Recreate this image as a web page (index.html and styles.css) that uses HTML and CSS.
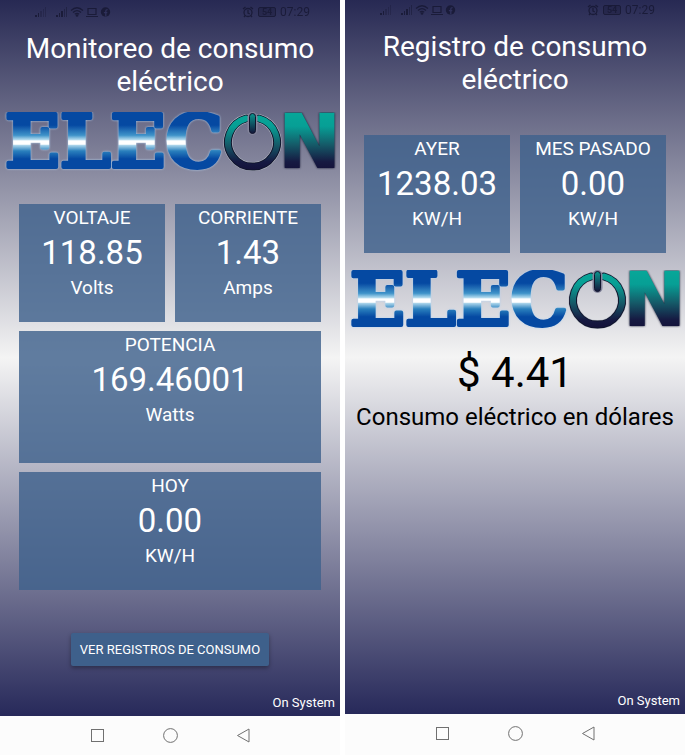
FILE: index.html
```html
<!DOCTYPE html>
<html lang="es">
<head>
<meta charset="utf-8">
<meta name="viewport" content="width=device-width, initial-scale=1">
<title>Elecon</title>
<link rel="stylesheet" href="styles.css">
</head>
<body>
<svg class="defs" aria-hidden="true">
  <defs>
    <linearGradient id="steel" gradientUnits="userSpaceOnUse" x1="0" y1="2" x2="0" y2="58">
      <stop offset="0" stop-color="#0549a2"/>
      <stop offset=".2" stop-color="#0549a2"/>
      <stop offset=".38" stop-color="#3f93c9"/>
      <stop offset=".46" stop-color="#b5dcef"/>
      <stop offset=".48" stop-color="#ffffff"/>
      <stop offset=".54" stop-color="#ffffff"/>
      <stop offset=".56" stop-color="#a9d3ea"/>
      <stop offset=".66" stop-color="#2a80bd"/>
      <stop offset=".8" stop-color="#0549a2"/>
      <stop offset="1" stop-color="#0549a2"/>
    </linearGradient>
    <linearGradient id="teal" gradientUnits="userSpaceOnUse" x1="0" y1="2" x2="0" y2="58">
      <stop offset="0" stop-color="#07a698"/>
      <stop offset=".22" stop-color="#079f95"/>
      <stop offset=".55" stop-color="#155a68"/>
      <stop offset=".85" stop-color="#161a42"/>
      <stop offset="1" stop-color="#14123a"/>
    </linearGradient>
    <linearGradient id="bar" gradientUnits="userSpaceOnUse" x1="0" y1="2" x2="0" y2="21">
      <stop offset="0" stop-color="#0b938c"/>
      <stop offset="1" stop-color="#14183c"/>
    </linearGradient>
    <g id="power-ring"><path d="M246 6.500A24.500 24.500 0 1 0 259 6.500"/></g>
    <symbol id="elecon" viewBox="0 0 340 60">
      <text class="logo-serif" x="5" y="55">ELEC</text>
      <g fill="none" stroke-linecap="round">
        <use href="#power-ring" stroke="#b9bfc9" stroke-width="9"/>
        <use href="#power-ring" stroke="#10142c" stroke-width="8"/>
        <use href="#power-ring" stroke="url(#teal)" stroke-width="6"/>
      </g>
      <rect x="247.500" y="0" width="10" height="23" rx="5" fill="#84859c"/>
      <rect x="249.500" y="1.500" width="6" height="20" rx="3" fill="url(#bar)" stroke="#10142c"/>
      <text class="logo-sans" x="279" y="55">N</text>
    </symbol>
    <symbol id="status-left" viewBox="0 0 76 12">
      <g fill="currentColor">
        <path d="M0 9h2v2H0zM3 7h1v4H3z"/>
        <path opacity=".4" d="M5 5h2v6H5zM8 3h1v8H8zM10 1h1v10h-1z"/>
        <path d="M21 9h2v2h-2zM24 7h1v4h-1zM26 5h2v6h-2z"/>
        <path opacity=".6" d="M29 3h1v8h-1zM31 1h1v10h-1z"/>
        <circle cx="42" cy="9.500" r="1.300"/>
        <circle cx="70.500" cy="6" r="4.700"/>
      </g>
      <g fill="none" stroke="currentColor" stroke-width="1.200">
        <path d="M36 4.500Q42 -1 48 4.500M38 6.500Q42 2.800 46 6.500M39.800 8.300Q42 6.300 44.200 8.300"/>
        <path d="M53 2.500h8v6h-8zM51 10.500h12"/>
      </g>
      <path d="M70.800 10.500V5.200q0-1.600 1.800-1.500M68.900 6.600h3.400" fill="none" stroke="#30325d" stroke-width="1.300"/>
    </symbol>
    <symbol id="alarm" viewBox="0 0 12 12">
      <g fill="none" stroke="currentColor" stroke-width="1.300">
        <circle cx="6" cy="6.500" r="4"/><path d="M6 4v3l1.800 1M1 3l2.500-2M11 3L8.500 1M3.300 9.500L2 11M8.700 9.500L10 11"/>
      </g>
    </symbol>
  </defs>
</svg>

<main class="phones">
  <section class="phone">
    <div class="screen">
      <div class="status">
        <svg class="status-icons"><use href="#status-left"/></svg>
        <span class="status-right"><svg class="alarm"><use href="#alarm"/></svg><span class="battery">54</span><time>07:29</time></span>
      </div>
      <h1 class="title">Monitoreo de consumo eléctrico</h1>
      <svg class="logo" viewBox="0 0 340 60" role="img" aria-label="Elecon"><use href="#elecon"/></svg>
      <div class="tiles">
        <article class="tile"><h2>VOLTAJE</h2><strong>118.85</strong><span>Volts</span></article>
        <article class="tile"><h2>CORRIENTE</h2><strong>1.43</strong><span>Amps</span></article>
        <article class="tile wide tall"><h2>POTENCIA</h2><strong>169.46001</strong><span>Watts</span></article>
        <article class="tile wide"><h2>HOY</h2><strong>0.00</strong><span>KW/H</span></article>
      </div>
      <button class="action" type="button">VER REGISTROS DE CONSUMO</button>
      <p class="brand">On System</p>
    </div>
    <nav class="nav">
      <button type="button" aria-label="Recientes"><svg viewBox="0 0 15 15"><rect x="1.500" y="1.500" width="12" height="12"/></svg></button>
      <button type="button" aria-label="Inicio"><svg viewBox="0 0 15 15"><circle cx="7.500" cy="7.500" r="6.900"/></svg></button>
      <button type="button" aria-label="Atrás"><svg viewBox="0 0 15 15"><path d="M13 1v13L1.500 7.500z"/></svg></button>
    </nav>
  </section>

  <section class="phone phone-log">
    <div class="screen">
      <div class="status">
        <svg class="status-icons"><use href="#status-left"/></svg>
        <span class="status-right"><svg class="alarm"><use href="#alarm"/></svg><span class="battery">54</span><time>07:29</time></span>
      </div>
      <h1 class="title">Registro de consumo eléctrico</h1>
      <div class="tiles">
        <article class="tile"><h2>AYER</h2><strong>1238.03</strong><span>KW/H</span></article>
        <article class="tile"><h2>MES PASADO</h2><strong>0.00</strong><span>KW/H</span></article>
      </div>
      <svg class="logo" viewBox="0 0 340 60" role="img" aria-label="Elecon"><use href="#elecon"/></svg>
      <p class="cost">$ 4.41</p>
      <p class="cost-label">Consumo eléctrico en dólares</p>
      <p class="brand">On System</p>
    </div>
    <nav class="nav">
      <button type="button" aria-label="Recientes"><svg viewBox="0 0 15 15"><rect x="1.500" y="1.500" width="12" height="12"/></svg></button>
      <button type="button" aria-label="Inicio"><svg viewBox="0 0 15 15"><circle cx="7.500" cy="7.500" r="6.900"/></svg></button>
      <button type="button" aria-label="Atrás"><svg viewBox="0 0 15 15"><path d="M13 1v13L1.500 7.500z"/></svg></button>
    </nav>
  </section>
</main>
</body>
</html>
```
FILE: styles.css
```css
* {
  box-sizing: border-box;
}

body {
  margin: 0;
  background: #fff;
  color: #fff;
  font-family: Roboto, "Liberation Sans", sans-serif;
}

h1, h2, p {
  margin: 0;
  font-weight: 400;
}

.defs {
  position: absolute;
  width: 0;
  height: 0;
}

.phones {
  display: grid;
  grid-template-columns: 1fr 1fr;
  gap: 5px;
  min-height: 100vh;
  padding-right: 1px;
}

.phone {
  display: flex;
  flex-direction: column;
}

.screen {
  flex: 1;
  display: flex;
  flex-direction: column;
  padding-top: 4px;
  background: linear-gradient(#272953, #f4f4f4 50%, #27295a);
}

.status {
  display: flex;
  align-items: center;
  justify-content: space-between;
  height: 16px;
  padding: 0 30px 0 35px;
  color: #14152f;
  opacity: 0.75;
}

.status-icons {
  width: 76px;
  height: 12px;
}

.status-right {
  display: flex;
  align-items: center;
  gap: 4px;
  font-size: 12px;
  line-height: 16px;
}

.alarm {
  width: 12px;
  height: 12px;
}

.battery {
  width: 18px;
  height: 10px;
  border: 1px solid currentColor;
  border-radius: 2px;
  background: rgba(20, 21, 47, 0.4);
  font-size: 9px;
  font-weight: 700;
  line-height: 8px;
  text-align: center;
}

.title {
  margin-top: 12px;
  padding: 0 20px;
  font-size: 28px;
  line-height: 33px;
  text-align: center;
}

.logo {
  display: block;
  width: 100%;
  margin-top: 14px;
}

.logo-serif {
  font: 700 72px "DejaVu Serif", serif;
  fill: url(#steel);
  stroke: url(#steel);
  stroke-width: 4px;
  stroke-linejoin: round;
  filter: drop-shadow(0 0 1px #b4d2f0);
}

.logo-sans {
  font: 700 73px "DejaVu Sans", sans-serif;
  fill: url(#teal);
  stroke: url(#teal);
  stroke-width: 2px;
  filter: drop-shadow(0 0 1px #10142c);
}

.tiles {
  display: grid;
  grid-template-columns: 1fr 1fr;
  gap: 9px 10px;
  margin: 32px 19px 0;
}

.tile {
  display: flex;
  flex-direction: column;
  align-items: center;
  min-height: 118px;
  padding-top: 2px;
  background: rgba(64, 98, 140, 0.82);
  font-size: 19px;
  line-height: 24px;
}

.tile h2 {
  font-size: 19px;
}

.tile strong {
  font-size: 33px;
  font-weight: 400;
  line-height: 46px;
}

.wide {
  grid-column: 1 / -1;
}

.tall {
  min-height: 132px;
}

.action {
  align-self: center;
  margin-top: 43px;
  padding: 0 9px;
  border: 0;
  border-radius: 2px;
  background: #3e608b;
  box-shadow: 0 2px 4px rgba(0, 0, 0, 0.35);
  color: #fff;
  font: 13px/33px Roboto, "Liberation Sans", sans-serif;
}

.brand {
  margin-top: auto;
  padding: 0 5px 4px;
  font-size: 13px;
  line-height: 18px;
  text-align: right;
}

.nav {
  display: flex;
  justify-content: center;
  gap: 58px;
  padding: 12px 0;
  background: #fcfcfc;
}

.nav button {
  width: 15px;
  height: 15px;
  padding: 0;
  border: 0;
  background: none;
}

.nav svg {
  display: block;
  fill: none;
  stroke: #707070;
}

.phone-log .screen {
  padding-top: 2px;
}

.phone-log .tiles {
  margin-top: 39px;
}

.phone-log .logo {
  margin-top: 17px;
}

.phone-log .nav {
  padding-bottom: 14px;
}

.cost {
  margin-top: 18px;
  color: #000;
  font-size: 42px;
  line-height: 50px;
  text-align: center;
}

.cost-label {
  margin-top: 4px;
  color: #000;
  font-size: 24px;
  line-height: 30px;
  text-align: center;
}
```
